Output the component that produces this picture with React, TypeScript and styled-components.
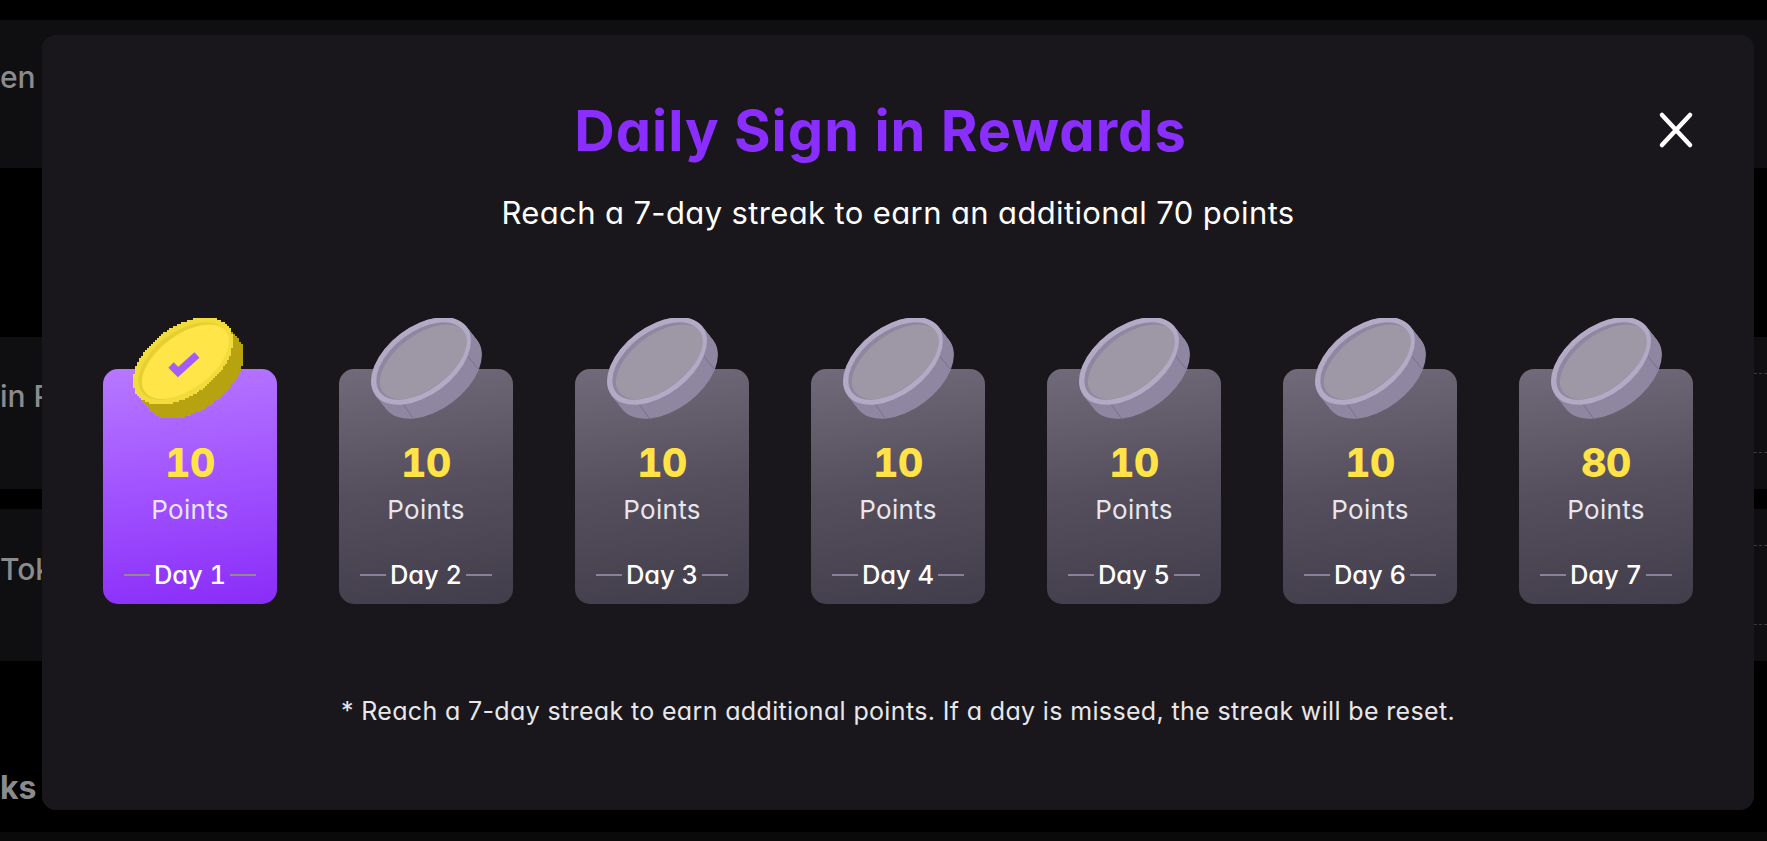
import { createGlobalStyle } from "styled-components";
import styled from "styled-components";

const GlobalStyle = createGlobalStyle`
  html, body {
    margin: 0;
    height: 100%;
    background: #000;
    overflow: hidden;
  }
  body {
    font-family: "Inter", "Liberation Sans", sans-serif;
    font-feature-settings: "cv11";
  }
`;

const Page = styled.div`
  position: relative;
  width: 1767px;
  height: 841px;
  overflow: hidden;
  display: flex;
  flex-direction: column;
  padding-top: 20px;
  box-sizing: border-box;
`;

const BgPanel = styled.div<{ $height: number; $gap: number }>`
  height: ${({ $height }) => $height}px;
  margin-bottom: ${({ $gap }) => $gap}px;
  flex: none;
  background: #0f0f11;
  display: flex;
  justify-content: space-between;
`;

const BgLabel = styled.div<{ $top: number }>`
  margin-top: ${({ $top }) => $top}px;
  font-size: 30px;
  line-height: 36px;
  font-weight: 500;
  color: #8b8b8d;
`;

const BgDashes = styled.div`
  width: 13px;
  padding-top: 36px;
  display: flex;
  flex-direction: column;
  gap: 78px;
`;

const BgDash = styled.div`
  border-top: 1px dashed #3a3a3d;
`;

const BgHeading = styled.div`
  margin-top: 108px;
  font-size: 32px;
  line-height: 38px;
  font-weight: 700;
  color: #8b8b8d;
`;

const BottomBand = styled.div`
  position: absolute;
  left: 0;
  right: 0;
  bottom: 0;
  height: 9px;
  background: #0a0a0b;
`;

const Modal = styled.div`
  position: absolute;
  left: 42px;
  top: 35px;
  width: 1712px;
  height: 775px;
  background: #19171b;
  border-radius: 14px;
  display: flex;
  flex-direction: column;
  align-items: center;
  padding: 0 61px;
  box-sizing: border-box;
`;

const Title = styled.h1`
  margin: 61px 35px 0 0;
  font-size: 56px;
  line-height: 70px;
  font-weight: 700;
  letter-spacing: 1.02px;
  color: #8a2eff;
`;

const Subtitle = styled.p`
  margin: 29px 0 0;
  font-size: 31px;
  line-height: 36px;
  font-weight: 400;
  letter-spacing: 0.37px;
  color: #fff;
`;

const CloseButton = styled.button`
  position: absolute;
  top: 76px;
  left: 1616px;
  width: 36px;
  height: 38px;
  padding: 0;
  border: 0;
  background: none;
  color: #fff;
  display: flex;
  align-items: center;
  justify-content: center;
`;

const CardRow = styled.div`
  width: 100%;
  margin-top: 138px;
  display: flex;
  justify-content: space-between;
`;

const Card = styled.div<{ $active?: boolean }>`
  position: relative;
  width: 174px;
  height: 235px;
  box-sizing: border-box;
  border-radius: 15px;
  background: ${({ $active }) =>
    $active
      ? "linear-gradient(172deg, #b778ff 0%, #a052ff 50%, #8a2cf8 100%)"
      : "linear-gradient(172deg, #716a7a 0%, #554f5d 50%, #423d4a 100%)"};
  display: flex;
  flex-direction: column;
  align-items: center;
  padding-top: 73px;
`;

const CoinSlot = styled.div<{ $active?: boolean }>`
  position: absolute;
  top: -51px;
  left: ${({ $active }) => ($active ? 30 : 32)}px;
  width: 112px;
  height: 103px;
`;

const Amount = styled.div`
  font-size: 39px;
  line-height: 42px;
  font-weight: 800;
  font-feature-settings: "cv11", "tnum";
  letter-spacing: -0.5px;
  color: #ffe347;
`;

const PointsLabel = styled.div`
  margin-top: 11px;
  font-size: 26px;
  line-height: 30px;
  font-weight: 400;
  letter-spacing: 0.3px;
  color: #e8e6ec;
`;

const DayRow = styled.div`
  margin-top: 35px;
  display: flex;
  align-items: center;
  gap: 4px;
`;

const DayLine = styled.span<{ $active?: boolean }>`
  width: 26px;
  height: 2px;
  background: ${({ $active }) => ($active ? "#8f8a8c" : "#8b7f9a")};
`;

const DayText = styled.span`
  font-size: 25.5px;
  line-height: 30px;
  font-weight: 500;
  font-feature-settings: "cv11", "tnum";
  color: #fff;
`;

const Footnote = styled.p`
  margin: 92px 0 0;
  font-size: 25px;
  line-height: 30px;
  letter-spacing: 0.35px;
  color: #e8e8ea;
`;

const greyCoin = { rim: "#b3abc5", inner: "#8f879f", face: "#9e98a6", side: "#8f86a2", edge: "#6f6780" };
const goldCoin = { rim: "#f1dc3c", inner: "#e6cf30", face: "#ffe547", side: "#b6a30f", edge: "#b6a30f" };

const CX = 50;
const CY = 43;
const RX = 57;
const RY = 34;
const ANGLE = (-37 * Math.PI) / 180;
const DISC = `rotate(-37 ${CX} ${CY})`;
const DEPTH = 14;

const inDisc = (x: number, y: number) => {
  const dx = x - CX;
  const dy = y - CY;
  const u = dx * Math.cos(ANGLE) + dy * Math.sin(ANGLE);
  const v = -dx * Math.sin(ANGLE) + dy * Math.cos(ANGLE);
  return (u * u) / (RX * RX) + (v * v) / (RY * RY) <= 1;
};

// the gold coin has a coarse, stepped outline, so it is built from 2px rows
const pixelRows = (test: (x: number, y: number) => boolean) => {
  const rows: { y: number; x0: number; x1: number }[] = [];
  for (let y = 0; y < 104; y += 2) {
    let x0 = -1;
    let x1 = -1;
    for (let x = 0; x < 114; x += 2) {
      if (test(x + 1, y + 1)) {
        if (x0 < 0) x0 = x;
        x1 = x + 2;
      }
    }
    if (x0 >= 0) rows.push({ y, x0, x1 });
  }
  return rows;
};

const inBody = (x: number, y: number) => {
  for (let i = 0; i <= DEPTH; i++) {
    if (inDisc(x - (i * 11) / DEPTH, y - i)) return true;
  }
  return false;
};

const PixelShape = ({ test, fill }: { test: (x: number, y: number) => boolean; fill: string }) => (
  <>
    {pixelRows(test).map((r) => (
      <rect key={r.y} x={r.x0} y={r.y} width={r.x1 - r.x0} height={2} fill={fill} />
    ))}
  </>
);

const Coin = ({ active }: { active?: boolean }) => {
  const c = active ? goldCoin : greyCoin;
  return (
    <svg width="112" height="103" viewBox="0 0 112 103">
      {active ? (
        <g shapeRendering="crispEdges">
          <PixelShape test={inBody} fill={c.side} />
          <PixelShape test={inDisc} fill={c.rim} />
        </g>
      ) : (
        <>
          {Array.from({ length: DEPTH + 1 }, (_, i) => (
            <ellipse
              key={i}
              cx={CX}
              cy={CY}
              rx={RX}
              ry={RY}
              fill={c.side}
              transform={`translate(${(i * 11) / DEPTH} ${i}) ${DISC}`}
            />
          ))}
          <path d="M96 37 L107 51" stroke={c.edge} strokeWidth="0.7" />
          <path d="M32 86 L42 100" stroke={c.edge} strokeWidth="0.7" />
          <ellipse cx={CX} cy={CY} rx={RX} ry={RY} fill={c.rim} transform={DISC} />
        </>
      )}
      <ellipse cx={CX} cy={CY} rx={51.5} ry={29} fill={c.inner} transform={DISC} />
      <ellipse cx={CX + 1.5} cy={CY + 2} rx={50.5} ry={27} fill={c.face} transform={DISC} />
      {active && <path d="M38 47 L45 54 L64 37" fill="none" stroke="#a55cff" strokeWidth="7.5" />}
    </svg>
  );
};

const CloseIcon = () => (
  <svg width="36" height="38" viewBox="0 0 36 38" fill="none" stroke="currentColor" strokeWidth="4.5" strokeLinecap="round">
    <path d="M4 4 L32 34 M32 4 L4 34" />
  </svg>
);

const days = [10, 10, 10, 10, 10, 10, 80];

const App = () => {
  return (
    <>
      <GlobalStyle />
      <Page>
        <BgPanel $height={148} $gap={169}>
          <BgLabel $top={39}>en</BgLabel>
        </BgPanel>
        <BgPanel $height={152} $gap={20}>
          <BgLabel $top={41}>in P</BgLabel>
          <BgDashes>
            <BgDash />
            <BgDash />
          </BgDashes>
        </BgPanel>
        <BgPanel $height={152} $gap={0}>
          <BgLabel $top={42}>Tok</BgLabel>
          <BgDashes>
            <BgDash />
            <BgDash />
          </BgDashes>
        </BgPanel>
        <BgHeading>ks</BgHeading>
        <BottomBand />

        <Modal>
          <Title>Daily Sign in Rewards</Title>
          <Subtitle>Reach a 7-day streak to earn an additional 70 points</Subtitle>
          <CloseButton aria-label="Close">
            <CloseIcon />
          </CloseButton>
          <CardRow>
            {days.map((points, i) => (
              <Card key={i} $active={i === 0}>
                <CoinSlot $active={i === 0}>
                  <Coin active={i === 0} />
                </CoinSlot>
                <Amount>{points}</Amount>
                <PointsLabel>Points</PointsLabel>
                <DayRow>
                  <DayLine $active={i === 0} />
                  <DayText>Day {i + 1}</DayText>
                  <DayLine $active={i === 0} />
                </DayRow>
              </Card>
            ))}
          </CardRow>
          <Footnote>* Reach a 7-day streak to earn additional points. If a day is missed, the streak will be reset.</Footnote>
        </Modal>
      </Page>
    </>
  );
};

export default App;
